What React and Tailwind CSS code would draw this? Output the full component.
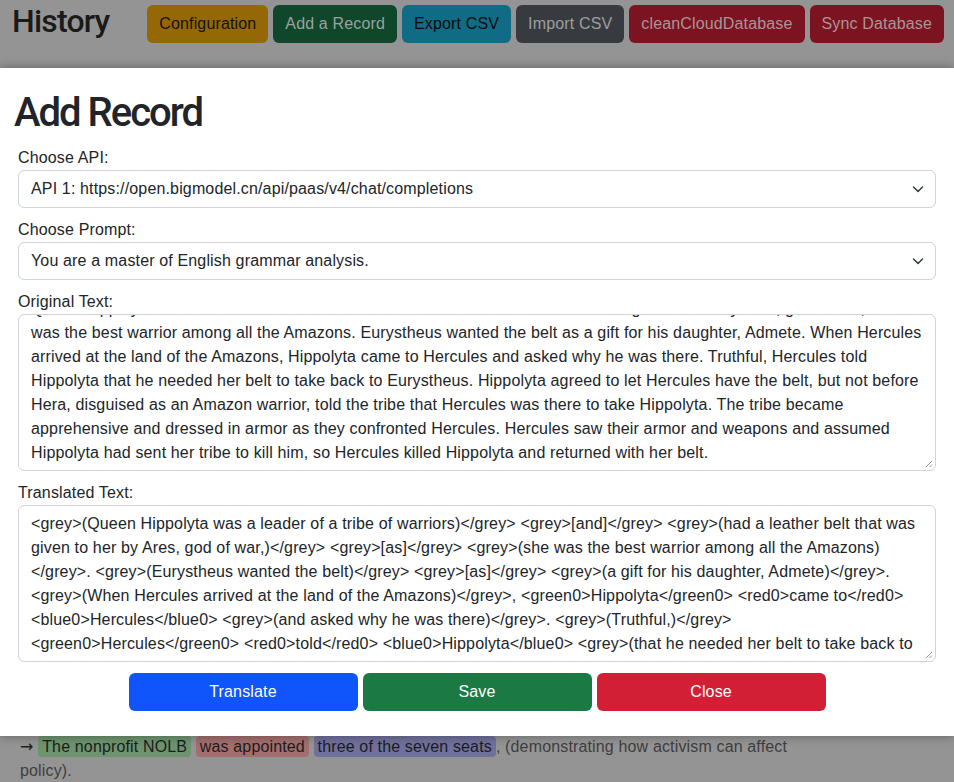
import React from 'react';

const headerButtons = [
    { label: 'Configuration', cls: 'bg-[#946806] text-[#131313]' },
    { label: 'Add a Record', cls: 'bg-[#10472b] text-[#98a39d]' },
    { label: 'Export CSV', cls: 'bg-[#106b85] text-[#0c0c0c]' },
    { label: 'Import CSV', cls: 'bg-[#373b3f] text-[#9c9ea0]' },
    { label: 'cleanCloudDatabase', cls: 'bg-[#7b1420] text-[#ab9396]' },
    { label: 'Sync Database', cls: 'bg-[#7b1420] text-[#ab9396]' },
];

const originalLines = [
    'Queen Hippolyta was a leader of a tribe of warriors and had a leather belt that was given to her by Ares, god of war, as she',
    'was the best warrior among all the Amazons. Eurystheus wanted the belt as a gift for his daughter, Admete. When Hercules',
    'arrived at the land of the Amazons, Hippolyta came to Hercules and asked why he was there. Truthful, Hercules told',
    'Hippolyta that he needed her belt to take back to Eurystheus. Hippolyta agreed to let Hercules have the belt, but not before',
    'Hera, disguised as an Amazon warrior, told the tribe that Hercules was there to take Hippolyta. The tribe became',
    'apprehensive and dressed in armor as they confronted Hercules. Hercules saw their armor and weapons and assumed',
    'Hippolyta had sent her tribe to kill him, so Hercules killed Hippolyta and returned with her belt.',
];

const translatedLines = [
    '<grey>(Queen Hippolyta was a leader of a tribe of warriors)</grey> <grey>[and]</grey> <grey>(had a leather belt that was',
    'given to her by Ares, god of war,)</grey> <grey>[as]</grey> <grey>(she was the best warrior among all the Amazons)',
    '</grey>. <grey>(Eurystheus wanted the belt)</grey> <grey>[as]</grey> <grey>(a gift for his daughter, Admete)</grey>.',
    '<grey>(When Hercules arrived at the land of the Amazons)</grey>, <green0>Hippolyta</green0> <red0>came to</red0>',
    '<blue0>Hercules</blue0> <grey>(and asked why he was there)</grey>. <grey>(Truthful,)</grey>',
    '<green0>Hercules</green0> <red0>told</red0> <blue0>Hippolyta</blue0> <grey>(that he needed her belt to take back to',
    'Eurystheus)</grey>. <grey>(Hippolyta agreed to let Hercules have the belt,)</grey> <grey>[but]</grey> <grey>(not before',
];

function Chevron() {
    return (
        <svg width="16" height="16" viewBox="0 0 16 16" className="shrink-0">
            <path d="M3.5 6l4.5 4.5 4.5-4.5" fill="none" stroke="#343a40" strokeWidth="1.5" strokeLinecap="round" strokeLinejoin="round" />
        </svg>
    );
}

function SelectBox({ value }) {
    return (
        <div className="flex h-[38px] items-center justify-between rounded-md border border-[#ced4da] bg-white pl-3 pr-[9px] text-[#212529]">
            <span>{value}</span>
            <Chevron />
        </div>
    );
}

function TextBox({ lines, scrolled }) {
    return (
        <div className="relative h-[157px] overflow-hidden rounded-md border border-[#ced4da] bg-white text-[#212529]">
            <div className={scrolled ? '-mt-6 px-3 py-1.5' : 'px-3 py-1.5'}>
                {lines.map((line, i) => (
                    <div key={i} className="whitespace-nowrap leading-6">{line}</div>
                ))}
            </div>
            {/* resize grip */}
            <svg width="8" height="8" viewBox="0 0 8 8" className="absolute bottom-[2px] right-[2px]">
                <path d="M7 1L1 7M7 4.5L4.5 7" stroke="#8a8a8a" strokeWidth="0.9" />
            </svg>
        </div>
    );
}

function Field({ label, children }) {
    return (
        <div className="mb-[10px]">
            <div className="leading-6 text-[#212529]">{label}</div>
            {children}
        </div>
    );
}

export default function App() {
    return (
        <div className="flex h-[782px] flex-col overflow-hidden bg-[#949494] text-base tracking-[0.15px] font-['Liberation_Sans',Arial,sans-serif]">
            <div className="flex h-[68px] shrink-0 items-start justify-between pl-3 pr-[10px]">
                <h2 className="mt-[1px] font-['Roboto',sans-serif] text-[32px] font-medium leading-[40px] tracking-[-0.8px] text-[#1a1a1a]">History</h2>
                <div className="mt-[5px] flex gap-[5px]">
                    {headerButtons.map(b => (
                        <button key={b.label} className={`h-[38px] rounded-md px-3 ${b.cls}`}>{b.label}</button>
                    ))}
                </div>
            </div>

            <div className="relative z-10 shrink-0 bg-white px-[18px] pt-[21px] pb-[25px] shadow-[0_0_10px_rgba(0,0,0,0.35)]">
                <h1 className="-ml-1 mb-[9px] font-['Roboto',sans-serif] text-[40px] font-medium leading-[48px] tracking-[-2px] text-[#212529]">Add Record</h1>
                <Field label="Choose API:">
                    <SelectBox value="API 1: https://open.bigmodel.cn/api/paas/v4/chat/completions" />
                </Field>
                <Field label="Choose Prompt:">
                    <SelectBox value="You are a master of English grammar analysis." />
                </Field>
                <Field label="Original Text:">
                    <TextBox lines={originalLines} scrolled />
                </Field>
                <div>
                    <div className="leading-6 text-[#212529]">Translated Text:</div>
                    <TextBox lines={translatedLines} />
                </div>
                <div className="mt-[11px] flex justify-center gap-[5px]">
                    <button className="h-[38px] w-[229px] rounded-md bg-[#1054fc] text-white">Translate</button>
                    <button className="h-[38px] w-[229px] rounded-md bg-[#1b7943] text-white">Save</button>
                    <button className="h-[38px] w-[229px] rounded-md bg-[#d21f36] text-white">Close</button>
                </div>
            </div>

            <div className="-mt-[1px] px-5 leading-6 text-[#3e3e3e]">
                <span className="font-['DejaVu_Sans',sans-serif] text-[#1e1e1e]">→</span>{' '}
                <span className="rounded px-1 py-[2px] text-[#1c1c1c] bg-[#6d946f]">The nonprofit NOLB</span>{' '}
                <span className="rounded px-1 py-[2px] text-[#1c1c1c] bg-[#a26e6e]">was appointed</span>{' '}
                <span className="rounded px-1 py-[2px] text-[#1c1c1c] bg-[#70709c]">three of the seven seats</span>
                , (demonstrating how activism can affect
                <br />
                policy).
            </div>
        </div>
    );
}
